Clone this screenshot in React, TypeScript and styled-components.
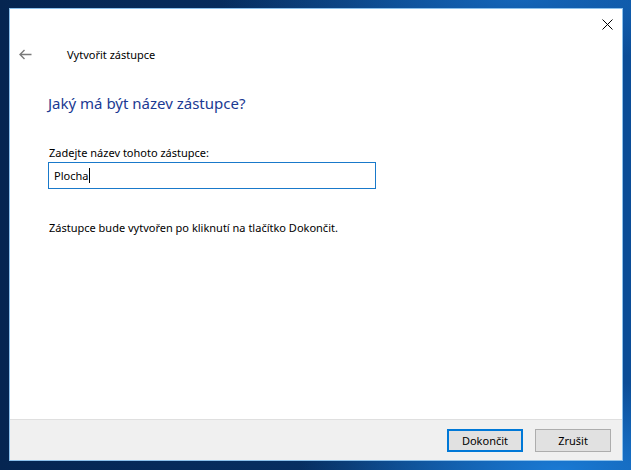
import styled, { createGlobalStyle } from 'styled-components';

const GlobalStyle = createGlobalStyle`
  html, body {
    margin: 0;
    padding: 0;
    width: 631px;
    height: 470px;
    overflow: hidden;
  }
  body {
    font-family: 'Noto Sans', 'Open Sans', sans-serif;
  }
`;

// plocha za oknem
const Desktop = styled.div`
  width: 631px;
  height: 470px;
  box-sizing: border-box;
  padding: 8px 8px 9px 9px;
  background:
    radial-gradient(ellipse 260px 90px at 560px 470px, #1a7ad4 0%, rgba(26, 122, 212, 0) 100%),
    radial-gradient(ellipse 300px 60px at 520px 0px, #1465b8 0%, rgba(20, 101, 184, 0) 100%),
    linear-gradient(90deg, #052551 0%, #073064 55%, #0b4d98 100%);
`;

const Window = styled.div`
  height: 100%;
  box-sizing: border-box;
  border: 1px solid #8cc1ec;
  background: #fff;
  display: flex;
  flex-direction: column;
`;

const TitleBar = styled.div`
  height: 30px;
  display: flex;
  justify-content: flex-end;
`;

const CloseButton = styled.button`
  width: 30px;
  height: 30px;
  border: none;
  background: transparent;
  padding: 0;
  display: flex;
  align-items: center;
  justify-content: center;
`;

const NavRow = styled.div`
  display: flex;
  align-items: center;
  height: 30px;
  padding-left: 9px;
`;

const BackButton = styled.span`
  width: 14px;
  display: flex;
  align-items: center;
`;

const WizardTitle = styled.span`
  margin-left: 34px;
  font-size: 11px;
  color: #000;
`;

const Content = styled.div`
  flex: 1;
  padding: 23px 0 0 38px;
  display: flex;
  flex-direction: column;
`;

const Heading = styled.h1`
  margin: 0;
  font-size: 15px;
  font-weight: 400;
  color: #1b3a93;
  line-height: 22px;
`;

const Label = styled.div`
  margin-top: 31px;
  font-size: 11px;
  line-height: 16px;
  color: #000;
  padding-left: 1px;
`;

const NameInput = styled.div`
  margin-top: 1px;
  width: 328px;
  height: 27px;
  box-sizing: border-box;
  border: 1px solid #1979ca;
  display: flex;
  align-items: center;
  padding-left: 5px;
  font-size: 11px;
  color: #000;
`;

const Caret = styled.span`
  display: inline-block;
  width: 1px;
  height: 15px;
  background: #000;
  margin-left: 1px;
`;

const Note = styled.div`
  margin-top: 31px;
  font-size: 11px;
  line-height: 16px;
  color: #000;
  padding-left: 1px;
`;

const Footer = styled.div`
  height: 41px;
  box-sizing: border-box;
  border-top: 1px solid #dfdfdf;
  background: #f0f0f0;
  display: flex;
  justify-content: flex-end;
  align-items: flex-start;
  gap: 12px;
  padding: 9px 11px 0 0;
`;

const Button = styled.button<{ $primary?: boolean }>`
  width: 76px;
  height: 23px;
  box-sizing: border-box;
  background: #e1e1e1;
  border: ${(p) => (p.$primary ? '2px solid #0078d7' : '1px solid #adadad')};
  font-family: 'Noto Sans', 'Open Sans', sans-serif;
  font-size: 11px;
  color: #000;
  padding: 0;
  line-height: 1;
`;

export default function App() {
  return (
    <>
      <GlobalStyle />
      <Desktop>
        <Window>
          <TitleBar>
            <CloseButton aria-label="Zavřít">
              <svg width="11" height="11" viewBox="0 0 11 11">
                <path d="M0.5 0.5 L10.5 10.5 M10.5 0.5 L0.5 10.5" stroke="#000" strokeWidth="1" />
              </svg>
            </CloseButton>
          </TitleBar>
          <NavRow>
            <BackButton>
              <svg width="13" height="11" viewBox="0 0 13 11">
                <path d="M1 5.5 H12.5 M5.5 1 L1 5.5 L5.5 10" stroke="#7a7a7a" strokeWidth="1.4" fill="none" />
              </svg>
            </BackButton>
            <WizardTitle>Vytvořit zástupce</WizardTitle>
          </NavRow>
          <Content>
            <Heading>Jaký má být název zástupce?</Heading>
            <Label>Zadejte název tohoto zástupce:</Label>
            <NameInput>
              Plocha<Caret />
            </NameInput>
            <Note>Zástupce bude vytvořen po kliknutí na tlačítko Dokončit.</Note>
          </Content>
          <Footer>
            <Button $primary>Dokončit</Button>
            <Button>Zrušit</Button>
          </Footer>
        </Window>
      </Desktop>
    </>
  );
}
